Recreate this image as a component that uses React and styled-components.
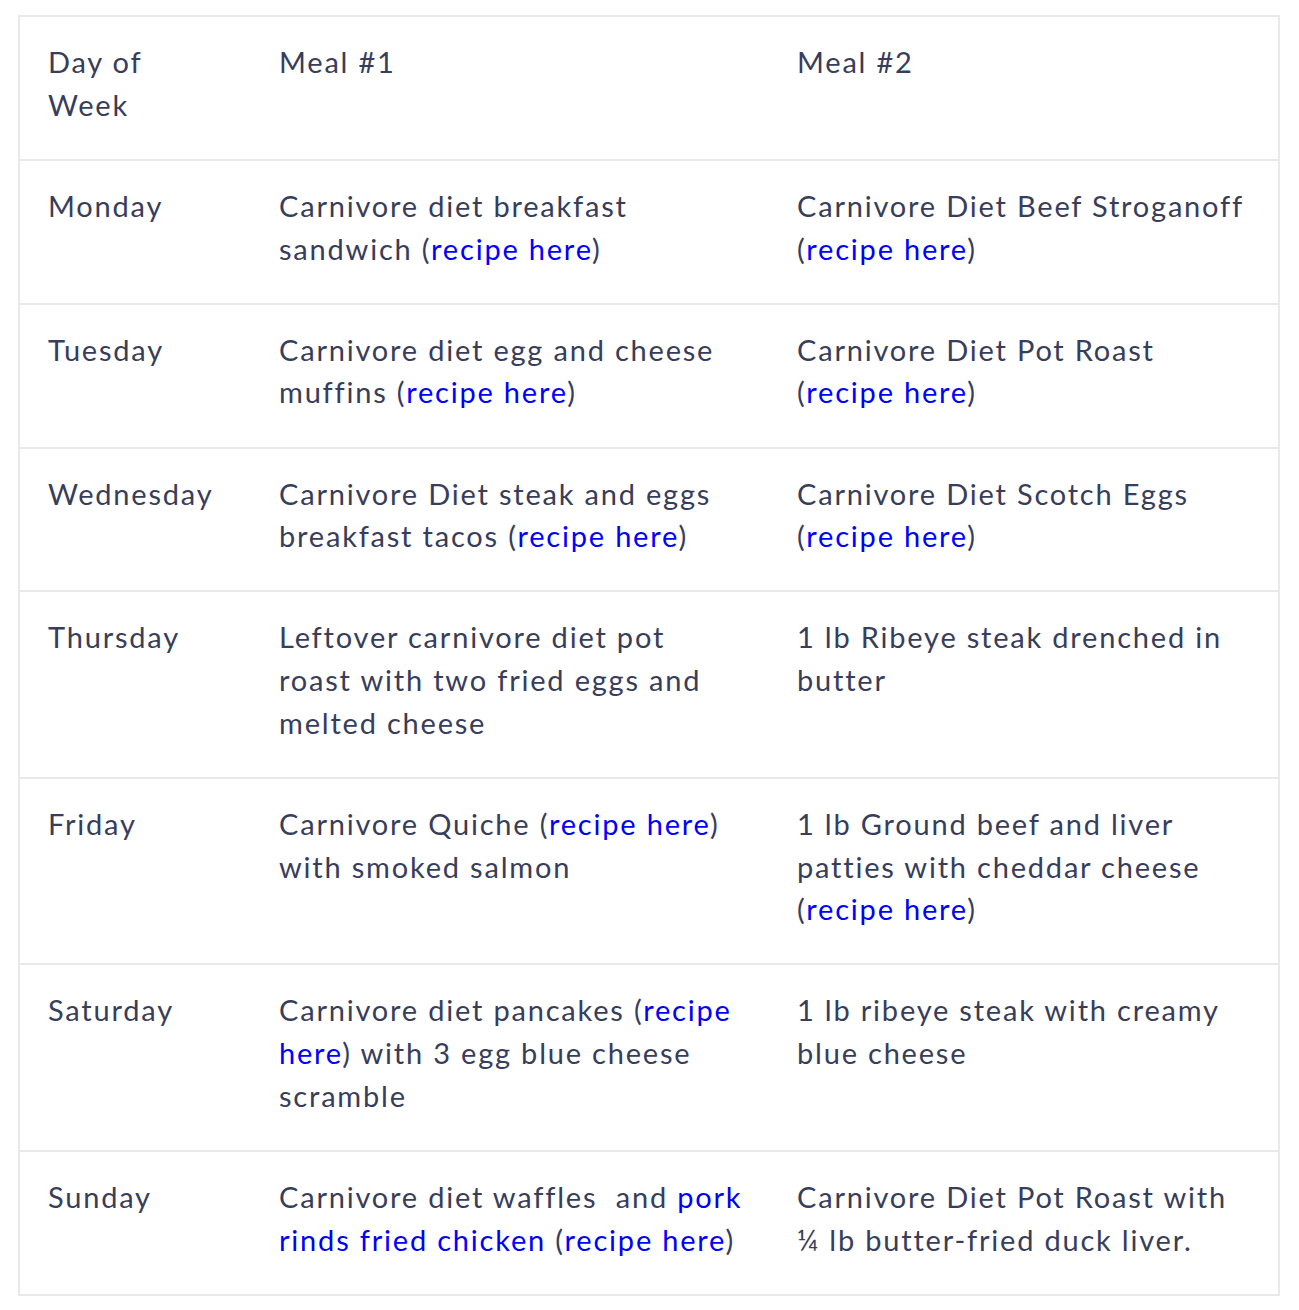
import styled, { createGlobalStyle } from "styled-components";

const GlobalStyle = createGlobalStyle`
  body {
    margin: 0;
    background: #fff;
  }
`;

const rows = [
  {
    day: "Monday",
    one: ["Carnivore diet breakfast sandwich (", { link: "recipe here" }, ")"],
    two: ["Carnivore Diet Beef Stroganoff (", { link: "recipe here" }, ")"],
  },
  {
    day: "Tuesday",
    one: ["Carnivore diet egg and cheese muffins (", { link: "recipe here" }, ")"],
    two: ["Carnivore Diet Pot Roast (", { link: "recipe here" }, ")"],
  },
  {
    day: "Wednesday",
    one: ["Carnivore Diet steak and eggs breakfast tacos (", { link: "recipe here" }, ")"],
    two: ["Carnivore Diet Scotch Eggs (", { link: "recipe here" }, ")"],
  },
  {
    day: "Thursday",
    one: ["Leftover carnivore diet pot roast with two fried eggs and melted cheese"],
    two: ["1 lb Ribeye steak drenched in butter"],
  },
  {
    day: "Friday",
    one: ["Carnivore Quiche (", { link: "recipe here" }, ") with smoked salmon"],
    two: ["1 lb Ground beef and liver patties with cheddar cheese (", { link: "recipe here" }, ")"],
  },
  {
    day: "Saturday",
    one: ["Carnivore diet pancakes (", { link: "recipe here" }, ") with 3 egg blue cheese scramble"],
    two: ["1 lb ribeye steak with creamy blue cheese"],
  },
  {
    day: "Sunday",
    one: ["Carnivore diet waffles\u00a0 and ", { link: "pork rinds fried chicken" }, " (", { link: "recipe here" }, ")"],
    two: ["Carnivore Diet Pot Roast with \u00bc lb butter-fried duck liver."],
  },
];

function Rich({ parts }) {
  return parts.map((p, i) =>
    typeof p === "string" ? <span key={i}>{p}</span> : <Link key={i} href="#">{p.link}</Link>
  );
}

export default function App() {
  return (
    <Page>
      <GlobalStyle />
      <Table>
        <colgroup>
          <col style={{ width: 231 }} />
          <col style={{ width: 518 }} />
          <col />
        </colgroup>
        <tbody>
          <Row>
            <Cell>Day of Week</Cell>
            <Cell>Meal #1</Cell>
            <Cell>Meal #2</Cell>
          </Row>
          {rows.map((r) => (
            <Row key={r.day}>
              <Cell>{r.day}</Cell>
              <Cell><Rich parts={r.one} /></Cell>
              <Cell><Rich parts={r.two} /></Cell>
            </Row>
          ))}
        </tbody>
      </Table>
    </Page>
  );
}

const Page = styled.div`
  padding: 15px 19px 14px 18px;
`;

const Table = styled.table`
  width: 1262px;
  table-layout: fixed;
  border-collapse: collapse;
  border: 2px solid #e9e9e9;
  font-family: Lato, "Noto Sans", sans-serif;
  font-size: 29px;
  line-height: 42.67px;
  letter-spacing: 1.8px;
  color: #373d5a;
`;

const Row = styled.tr`
  border-bottom: 2px solid #e9e9e9;
`;

const Cell = styled.td`
  vertical-align: top;
  padding: 24px 23px 32.5px 29px;

  &:first-child {
    padding-left: 28px;
  }
`;

const Link = styled.a`
  color: #0000ff;
  text-decoration: none;
`;
